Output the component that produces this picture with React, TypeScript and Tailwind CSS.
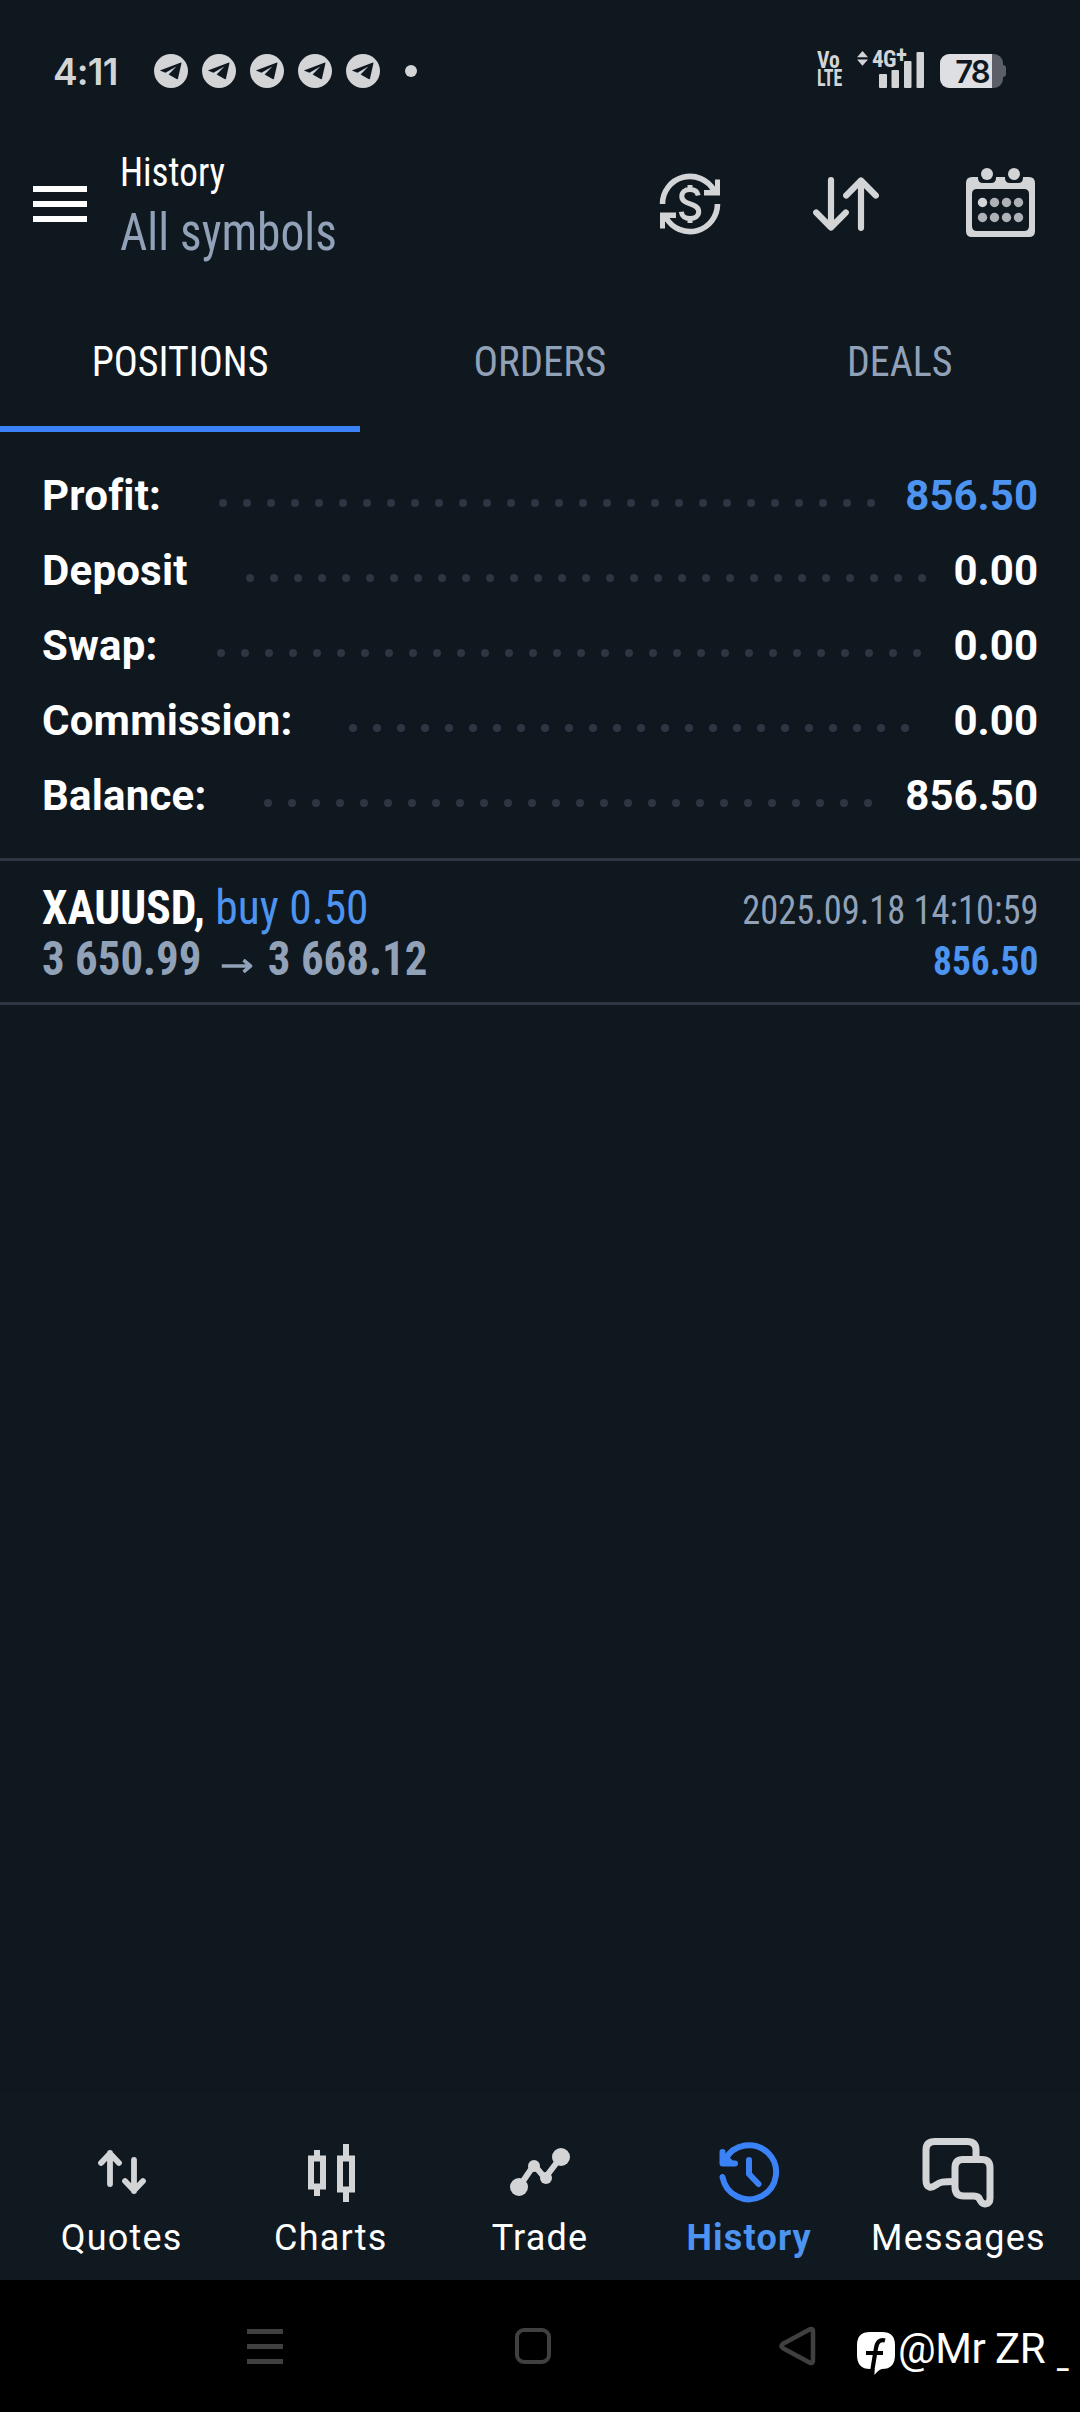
import type { ReactNode } from "react";

const INK = "#d3d4d6";

function TelegramIcon() {
  return (
    <svg className="h-[34px] w-[34px]" viewBox="0 0 34 34">
      <circle cx="17" cy="17" r="17" fill={INK} />
      <path d="M5.8 16.6 27 8.6 Q27.6 8.6 27.4 9.6 L24 24.6 Q23.6 25.6 22.6 25 L14.6 20.6 L22.4 12.4 L11.4 18.8 Z" fill="#0f171f" />
    </svg>
  );
}

function StatusBar() {
  return (
    <div className="flex h-[142px] items-center pl-[53px] pr-[74px] text-[#d3d4d6]">
      <span className="w-[101px] font-[Inter] text-[37px] font-semibold leading-none tracking-[-0.8px]">4:11</span>
      <div className="flex items-center gap-[14px]">
        {[0, 1, 2, 3, 4].map((i) => (
          <TelegramIcon key={i} />
        ))}
      </div>
      <span className="ml-[25px] h-3 w-3 rounded-full bg-[#d3d4d6]" />
      <div className="mb-[3px] ml-auto flex h-[37px] items-end gap-4">
        <div className="w-6 font-[Roboto] text-[23px] font-bold leading-[18px] [font-stretch:75%]">
          <div className="origin-left scale-x-[0.94]">Vo</div>
          <div className="origin-left scale-x-[0.78]">LTE</div>
        </div>
        <div className="relative h-[37px] w-[67px]">
          <svg className="h-full w-full" viewBox="0 0 67 37" fill={INK}>
            <path d="M5.5 0 11 6.2H0ZM0 8.6H11L5.5 14.8Z" />
            <rect x="22" y="23" width="8" height="14" rx="1" />
            <rect x="34.500" y="19" width="7.500" height="18" rx="1" />
            <rect x="47" y="10" width="7.500" height="27" rx="1" />
            <rect x="59.500" y="1" width="7.500" height="36" rx="1" />
          </svg>
          <div className="absolute left-[15px] top-[-3px] flex font-[Roboto] text-[23px] font-bold leading-none [font-stretch:75%]">
            <span className="w-[24px] tracking-[-0.5px]">4G</span>
            <span className="mt-[-4px]">+</span>
          </div>
        </div>
        <div className="flex items-center">
          <div className="flex h-[34px] w-[63px] items-center justify-center overflow-hidden rounded-[9px] bg-[linear-gradient(to_right,#dedfe2_52px,#5c5f66_52px)] pl-px font-[Inter] text-[31px] font-semibold leading-none tracking-[-2px] text-[#0f171f]">78</div>
          <div className="h-3 w-[3px] rounded-r-[3px] bg-[#5c5f66]" />
        </div>
      </div>
    </div>
  );
}

function CurrencyIcon() {
  return (
    <svg className="h-[62px] w-[62px]" viewBox="0 0 62 62" fill="none" stroke={INK} strokeWidth="5.600">
      <path d="M3.500 31A27.500 27.500 0 0 1 55 17.500M58.500 31A27.500 27.500 0 0 1 7 44.500" />
      <path d="M61 6.500V22.500H45V17H52L56 13V6.500ZM1 55.500V39.500H17V45H10L6 49V55.500Z" fill={INK} stroke="none" />
      <path d="M39.200 22.500C38.500 18.600 35.500 16.600 31 16.600C26 16.600 22.800 19.400 22.800 23.400C22.800 32.500 39.700 29.200 39.700 38.600C39.700 42.800 36 45.600 31 45.600C26 45.600 22.800 43 22.300 38.800M31 12V17M31 45V50" strokeWidth="5" />
    </svg>
  );
}

function SortIcon() {
  return (
    <svg className="h-[54px] w-[66px]" viewBox="0 0 66 54" fill="none" stroke={INK} strokeWidth="6.200" strokeLinecap="round" strokeLinejoin="round">
      <path d="M18 3.200V50M3.200 35.500 18 50.500 32.800 35.500M48 50.800V4M33.200 18.500 48 3.500 62.800 18.500" />
    </svg>
  );
}

function CalendarIcon() {
  return (
    <svg className="h-[69px] w-[69px]" viewBox="0 0 69 69" fill={INK}>
      <path fillRule="evenodd" d="M6 9H12V10Q12 15 17 15H25Q30 15 30 10V9H39V10Q39 15 44 15H52Q57 15 57 10V9H63Q69 9 69 15V63Q69 69 63 69H6Q0 69 0 63V15Q0 9 6 9ZM11 21Q6 21 6 26V58Q6 63 11 63H58Q63 63 63 58V26Q63 21 58 21Z" />
      <circle cx="21" cy="6" r="6" />
      <circle cx="48" cy="6" r="6" />
      {[34.5, 49.5].map((y) =>
        [16.5, 28.5, 40.5, 52.5].map((x) => (
          <circle key={`${x}-${y}`} cx={x} cy={y} r="4.700" fill={x === 16.5 && y === 34.5 ? INK : "#aeb2b7"} />
        ))
      )}
    </svg>
  );
}

function Header() {
  return (
    <header className="mb-6 flex h-[124px] items-center pl-[33px] pr-[45px]">
      <div className="flex w-[54px] flex-col gap-[9px]">
        <span className="h-1.5 bg-white" />
        <span className="h-1.5 bg-white" />
        <span className="h-1.5 bg-white" />
      </div>
      <div className="ml-[33px] origin-left scale-x-[0.93] whitespace-nowrap pt-[2px] font-[Roboto] font-[440] [font-stretch:75%]">
        <div className="text-[40px] leading-[56px] text-white">History</div>
        <div className="text-[51px] leading-[64px] text-[#91a1b8]">All symbols</div>
      </div>
      <div className="ml-auto flex items-center">
        <CurrencyIcon />
        <div className="ml-[92px]"><SortIcon /></div>
        <div className="mb-[3px] ml-[87px]"><CalendarIcon /></div>
      </div>
    </header>
  );
}

function Tabs() {
  return (
    <nav className="grid h-[142px] grid-cols-3 font-[Roboto] text-[43px] font-[430] leading-none text-[#91a1b8] [font-stretch:75%]">
      <div className="relative flex items-center justify-center text-white">
        <span className="scale-x-[0.93]">POSITIONS</span>
        <span className="absolute inset-x-0 bottom-0 h-1.5 bg-[#3b82f6]" />
      </div>
      <div className="flex items-center justify-center"><span className="scale-x-[0.95]">ORDERS</span></div>
      <div className="flex items-center justify-center"><span className="scale-x-[0.93]">DEALS</span></div>
    </nav>
  );
}

const SUMMARY = [
  { label: "Profit:", value: "856.50", start: 177, dots: 28, blue: true },
  { label: "Deposit", value: "0.00", start: 204, dots: 29 },
  { label: "Swap:", value: "0.00", start: 175, dots: 30 },
  { label: "Commission:", value: "0.00", start: 307, dots: 24 },
  { label: "Balance:", value: "856.50", start: 222, dots: 26 },
];

function Summary() {
  return (
    <section className="border-b-[3px] border-[#2f3743] pb-[25px] pt-[26px] font-[Roboto] text-[42px] font-bold leading-none text-white [font-variant-ligatures:none]">
      {SUMMARY.map((r) => (
        <div key={r.label} className="flex h-[75px] items-center pl-[42px] pr-[42px]">
          <span className="whitespace-nowrap tracking-[0.2px]" style={{ width: r.start }}>{r.label}</span>
          <div className="flex gap-4 pt-[15px]">
            {Array.from({ length: r.dots }, (_, i) => (
              <span key={i} className="h-2 w-2 rounded-full bg-[#2e3543]" />
            ))}
          </div>
          <span className={r.blue ? "ml-auto text-[#4d93f0]" : "ml-auto"}>{r.value}</span>
        </div>
      ))}
    </section>
  );
}

function Deal() {
  return (
    <section className="flex h-[144px] justify-between border-b-[3px] border-[#2f3743] px-[42px] font-[Roboto] leading-[51px] [font-stretch:75%]">
      <div className="pt-[21px] text-[48px]">
        <div className="origin-left scale-x-[0.948] font-[420] text-[#4d93f0]"><b className="text-white">XAUUSD,</b> buy 0.50</div>
        <div className="flex origin-left scale-x-[0.935] font-bold text-[#91a1b8]">
          3 650.99
          <svg className="ml-[21px] mr-[17px] mt-[26px] h-[14px] w-[33px]" viewBox="0 0 33 14" fill="none" stroke="#91a1b8" strokeWidth="3.600"><path d="M0 7H31M23.500 1 31 7 23.500 13" /></svg>
          3 668.12
        </div>
      </div>
      <div className="pt-[24px] text-right text-[40px] text-[#91a1b8]">
        <div className="origin-right scale-x-[0.91]">2025.09.18 14:10:59</div>
        <div className="origin-right scale-x-[0.935] font-bold text-[#4d93f0]">856.50</div>
      </div>
    </section>
  );
}

const ic = "h-[72px] w-[72px]";

function QuotesIcon() {
  return (
    <svg className={ic} viewBox="0 0 72 72" fill="none" stroke={INK} strokeWidth="5.800" strokeLinecap="round" strokeLinejoin="round">
      <path d="M24 48V17M15 27 24 17.500 33 27M48 24V55M39 45 48 54.500 57 45" />
    </svg>
  );
}

function ChartsIcon() {
  return (
    <svg className={ic} viewBox="0 0 72 72" fill="none" stroke={INK} strokeWidth="6">
      <path d="M16 22.500H28V50.500H16ZM45 22.500H57V53.500H45ZM22 14V22M22 50V60M51 8V22M51 54V66" />
    </svg>
  );
}

function TradeIcon() {
  return (
    <svg className={ic} viewBox="0 0 72 72" fill={INK} stroke={INK} strokeLinejoin="round">
      <path d="M15 51 30 29 41 42 57 21" fill="none" strokeWidth="6" />
      <circle cx="15" cy="51" r="9" stroke="none" />
      <circle cx="57" cy="21" r="9" stroke="none" />
      <circle cx="30" cy="30" r="6" stroke="none" />
      <circle cx="42" cy="42" r="6" stroke="none" />
    </svg>
  );
}

function HistoryIcon() {
  return (
    <svg className={ic} viewBox="0 0 72 72" fill="none" stroke="#3b82f6" strokeWidth="6" strokeLinecap="round" strokeLinejoin="round">
      <path d="M9.500 41A27 27 0 1 0 12 24M9.500 16V27.500H22M36 24V38L45.500 48" />
      <path d="M9.500 17V27.500H21Z" fill="#3b82f6" strokeWidth="3" />
    </svg>
  );
}

function MessagesIcon() {
  return (
    <svg className={ic} viewBox="0 0 72 72" fill="none" stroke={INK} strokeWidth="7" strokeLinejoin="round">
      <path d="M54 24V14Q54 5.500 45 5.500H13Q4 5.500 4 14V44C4 53 10 52 14 49C18 46 20 45.500 33 45.500" />
      <path d="M41 23.500H60Q68 23.500 68 32V62C68 69 61 70 58 64C57 61 55 60 52 60H42Q33 60 33 51V32Q33 23.500 41 23.500Z" />
    </svg>
  );
}

function NavItem({ label, active, children }: { label: string; active?: boolean; children: ReactNode }) {
  return (
    <div className="flex flex-col items-center">
      {children}
      <span className={active ? "font-bold text-[#4d93f0]" : ""}>{label}</span>
    </div>
  );
}

function BottomNav() {
  return (
    <nav className="mt-auto grid h-[187px] grid-cols-5 bg-[#101820] px-[17px] pt-[43px] font-[Roboto] text-[36px] leading-[60px] tracking-[1.2px] text-white">
      <NavItem label="Quotes"><QuotesIcon /></NavItem>
      <NavItem label="Charts"><ChartsIcon /></NavItem>
      <NavItem label="Trade"><TradeIcon /></NavItem>
      <NavItem label="History" active><HistoryIcon /></NavItem>
      <NavItem label="Messages"><MessagesIcon /></NavItem>
    </nav>
  );
}

function SystemBar() {
  return (
    <div className="flex h-[132px] items-center bg-black pl-[247px]">
      <div className="flex w-9 shrink-0 flex-col gap-[10px]">
        <span className="h-[5px] bg-[#404040]" />
        <span className="h-[5px] bg-[#404040]" />
        <span className="h-[5px] bg-[#404040]" />
      </div>
      <span className="ml-[232px] h-9 w-9 shrink-0 rounded-[9px] border-[4px] border-[#404040]" />
      <svg className="ml-[227px] h-[40px] w-[38px] shrink-0" viewBox="0 0 38 40" fill="none" stroke="#404040" strokeWidth="4.500" strokeLinejoin="round">
        <path d="M32 3.200 5 17.800Q1.800 20 5 22.200L32 36.800Q35 37.800 35 35V5Q35 2.200 32 3.200Z" />
      </svg>
      <div className="ml-[41px] flex shrink-0 items-center text-white">
        <svg className="mt-[15px] h-[43px] w-[38px]" viewBox="0 0 38 43">
          <path d="M13 0H25Q38 0 38 13V23Q38 37 25 37Q21 38 17.500 43V37H13Q0 37 0 23V13Q0 0 13 0Z" fill="white" />
          <path d="M28 8.500Q20.500 6.500 19 16L14.500 43M9 21H26" fill="none" stroke="black" strokeWidth="4.200" />
        </svg>
        <span className="ml-[3px] mt-[5px] whitespace-nowrap font-[Roboto] text-[42px] font-[370] leading-none tracking-[-0.5px]">
          @Mr ZR <span className="relative left-[2px] top-[5px] text-[26px] font-bold">_</span>
        </span>
      </div>
    </div>
  );
}

export default function App() {
  return (
    <div className="flex h-[2412px] w-[1080px] flex-col overflow-hidden bg-[#0f171f]">
      <StatusBar />
      <Header />
      <Tabs />
      <Summary />
      <Deal />
      <BottomNav />
      <SystemBar />
    </div>
  );
}
